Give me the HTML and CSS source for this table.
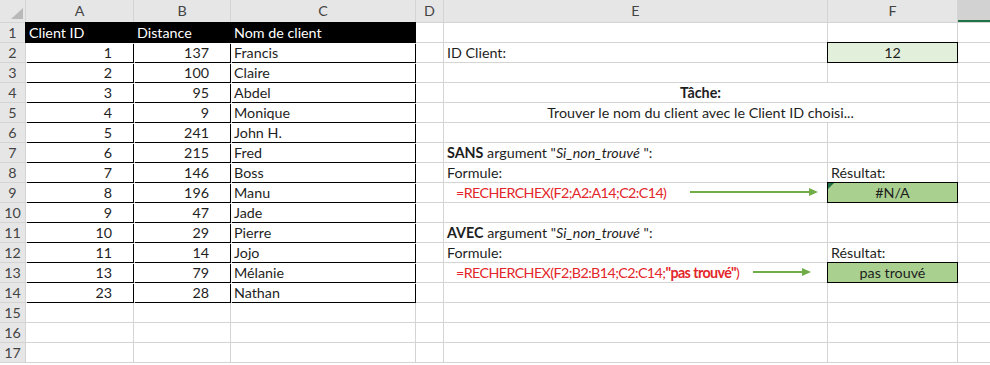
FILE: index.html
```html
<!doctype html>
<html>
<head>
	<meta charset="utf-8" />
	<title>RECHERCHEX - Si_non_trouvé</title>
	<link rel="stylesheet" href="styles.css">
</head>
<body>

<div class="book">

<table class="sheet">
	<colgroup>
		<col class="c-hd" />
		<col class="c-a" />
		<col class="c-b" />
		<col class="c-c" />
		<col class="c-d" />
		<col class="c-e" />
		<col class="c-f" />
		<col class="c-g" />
	</colgroup>

	<tr class="cols">
		<th class="corner"></th>
		<th>A</th><th>B</th><th>C</th><th>D</th><th>E</th><th>F</th>
		<th class="sel"></th>
	</tr>

	<tr>
		<th>1</th>
		<td class="top">Client ID</td><td class="top">Distance</td><td class="top">Nom de client</td>
		<td></td><td></td><td></td><td></td>
	</tr>
	<tr>
		<th>2</th>
		<td class="dt n">1</td><td class="dt n">137</td><td class="dt">Francis</td>
		<td></td><td>ID Client:</td><td class="box input">12</td><td></td>
	</tr>
	<tr>
		<th>3</th>
		<td class="dt n">2</td><td class="dt n">100</td><td class="dt">Claire</td>
		<td></td><td></td><td></td><td></td>
	</tr>
	<tr>
		<th>4</th>
		<td class="dt n">3</td><td class="dt n">95</td><td class="dt">Abdel</td>
		<td></td><td colspan="2" class="mid"><b>Tâche:</b></td><td></td>
	</tr>
	<tr>
		<th>5</th>
		<td class="dt n">4</td><td class="dt n">9</td><td class="dt">Monique</td>
		<td></td><td colspan="2" class="mid">Trouver le nom du client avec le Client ID choisi...</td><td></td>
	</tr>
	<tr>
		<th>6</th>
		<td class="dt n">5</td><td class="dt n">241</td><td class="dt">John H.</td>
		<td></td><td></td><td></td><td></td>
	</tr>
	<tr>
		<th>7</th>
		<td class="dt n">6</td><td class="dt n">215</td><td class="dt">Fred</td>
		<td></td><td><b>SANS</b> argument "<i>Si_non_trouvé</i> ":</td><td></td><td></td>
	</tr>
	<tr>
		<th>8</th>
		<td class="dt n">7</td><td class="dt n">146</td><td class="dt">Boss</td>
		<td></td><td>Formule:</td><td>Résultat:</td><td></td>
	</tr>
	<tr>
		<th>9</th>
		<td class="dt n">8</td><td class="dt n">196</td><td class="dt">Manu</td>
		<td></td><td class="fx">=RECHERCHEX(F2;A2:A14;C2:C14)</td><td class="box res err">#N/A</td><td></td>
	</tr>
	<tr>
		<th>10</th>
		<td class="dt n">9</td><td class="dt n">47</td><td class="dt">Jade</td>
		<td></td><td></td><td></td><td></td>
	</tr>
	<tr>
		<th>11</th>
		<td class="dt n">10</td><td class="dt n">29</td><td class="dt">Pierre</td>
		<td></td><td><b>AVEC</b> argument "<i>Si_non_trouvé</i> ":</td><td></td><td></td>
	</tr>
	<tr>
		<th>12</th>
		<td class="dt n">11</td><td class="dt n">14</td><td class="dt">Jojo</td>
		<td></td><td>Formule:</td><td>Résultat:</td><td></td>
	</tr>
	<tr>
		<th>13</th>
		<td class="dt n">13</td><td class="dt n">79</td><td class="dt">Mélanie</td>
		<td></td><td class="fx">=RECHERCHEX(F2;B2:B14;C2:C14;<b>"pas trouvé"</b>)</td><td class="box res">pas trouvé</td><td></td>
	</tr>
	<tr>
		<th>14</th>
		<td class="dt n">23</td><td class="dt n">28</td><td class="dt">Nathan</td>
		<td></td><td></td><td></td><td></td>
	</tr>
	<tr>
		<th>15</th>
		<td></td><td></td><td></td><td></td><td></td><td></td><td></td>
	</tr>
	<tr>
		<th>16</th>
		<td></td><td></td><td></td><td></td><td></td><td></td><td></td>
	</tr>
	<tr>
		<th>17</th>
		<td></td><td></td><td></td><td></td><td></td><td></td><td></td>
	</tr>
</table>

<!-- arrows drawn on top of the sheet -->
<svg class="arrow a1" width="130" height="10" viewBox="0 0 130 10">
	<line x1="0" y1="5" x2="120" y2="5" />
	<polygon points="119,1 128,5 119,9" />
</svg>

<svg class="arrow a2" width="60" height="10" viewBox="0 0 60 10">
	<line x1="0" y1="5" x2="50" y2="5" />
	<polygon points="49,1 58,5 49,9" />
</svg>

</div>

</body>
</html>
```

FILE: styles.css
```css
body {
	margin: 0;
	background: #fff;
	overflow: hidden;
}

div.book {
	position: relative;
	width: 990px;
	height: 365px;
	overflow: hidden;
}

table.sheet {
	margin: -1px 0 0 -1px;
	width: 1000px;

	table-layout: fixed;
	border-collapse: separate;
	border-spacing: 1px;

	background: #d4d4d4;

	font-family: Lato, "Liberation Sans", sans-serif;
	font-size: 14.3px;
	color: #1e1e1e;
}

col.c-hd { width: 25px;  }
col.c-a  { width: 107px; }
col.c-b  { width: 96px;  }
col.c-c  { width: 184px; }
col.c-d  { width: 27px;  }
col.c-e  { width: 383px; }
col.c-f  { width: 129px; }
col.c-g  { width: 40px;  }

table.sheet tr {
	height: 19px;
}

table.sheet td,
table.sheet th {
	padding: 0 3px;
	height: 19px;
	line-height: 19px;

	white-space: nowrap;
	overflow: hidden;

	background: #fff;
	font-weight: normal;
	text-align: left;
	vertical-align: bottom;
}

/* column and row headers */
table.sheet th {
	background: #e6e6e6;
	color: #444;
	text-align: center;
	padding: 0;
}

table.sheet tr.cols th {
	height: 22px;
	line-height: 22px;
}

table.sheet th.corner {
	position: relative;
}

table.sheet th.corner::after {
	content: "";
	position: absolute;
	right: 2px;
	bottom: 3px;

	border-style: solid;
	border-width: 0 0 11px 12px;
	border-color: transparent transparent #b9b9b9 transparent;
}

table.sheet th.sel {
	background: #d2d2d2;
	box-shadow: inset 0 -2px 0 #217346;
}

/* client table */
table.sheet td.top {
	background: #000;
	color: #fff;
	outline: 1px solid #000;
}

table.sheet td.dt {
	box-shadow: 1px 1px 0 #000;
}

table.sheet td.n {
	text-align: right;
	padding-right: 21px;
}

/* right part */
table.sheet td.mid {
	text-align: center;
}

table.sheet td.fx {
	padding-left: 12px;
	color: #e3262a;
	letter-spacing: -0.6px;
}

table.sheet td.box {
	outline: 1px solid #000;
	text-align: center;
}

table.sheet td.input {
	background: #e2efda;
}

table.sheet td.res {
	background: #a9d08e;
}

table.sheet td.err {
	position: relative;
}

table.sheet td.err::before {
	content: "";
	position: absolute;
	left: 0;
	top: 0;

	border-style: solid;
	border-width: 6px 6px 0 0;
	border-color: #1f7145 transparent transparent transparent;
}

svg.arrow {
	position: absolute;
}

svg.arrow line {
	stroke: #70ad47;
	stroke-width: 2;
}

svg.arrow polygon {
	fill: #70ad47;
}

svg.a1 {
	left: 690px;
	top: 187px;
}

svg.a2 {
	left: 753px;
	top: 267px;
}
```
